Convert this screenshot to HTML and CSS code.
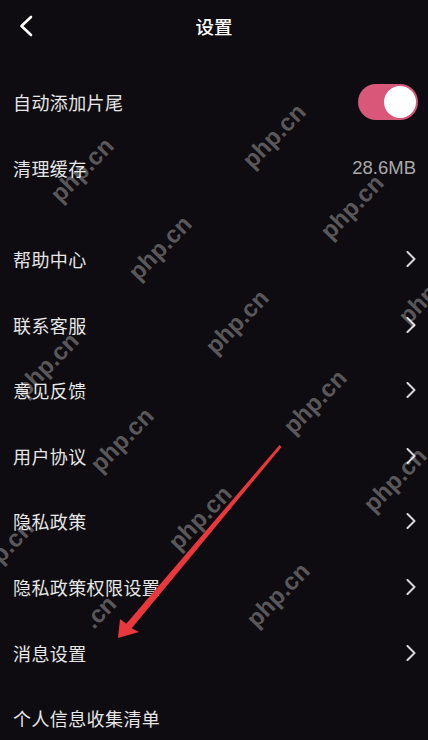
FILE: index.html
```html
<!DOCTYPE html>
<html lang="zh-CN">
<head>
  <meta charset="UTF-8" />
  <meta name="viewport" content="width=device-width, initial-scale=1.0"/>
  <title>设置</title>
  <link rel="stylesheet" href="styles.css">
</head>
<body>
  <div class="screen">
    <header class="nav">
      <span class="back">
        <svg width="14" height="22" viewBox="0 0 14 22"><polyline points="12,2 2.5,11 12,20" fill="none" stroke="#fff" stroke-width="2.6" stroke-linecap="round" stroke-linejoin="round"/></svg>
      </span>
      <h1>设置</h1>
      <span></span>
    </header>

    <section class="group group-top">
      <div class="row">
        <span class="label">自动添加片尾</span>
        <span class="toggle on"><span class="knob"></span></span>
      </div>
      <div class="row">
        <span class="label">清理缓存</span>
        <span class="value">28.6MB</span>
      </div>
    </section>

    <section class="group">
      <div class="row"><span class="label">帮助中心</span><span class="chev"></span></div>
      <div class="row"><span class="label">联系客服</span><span class="chev"></span></div>
      <div class="row"><span class="label">意见反馈</span><span class="chev"></span></div>
      <div class="row"><span class="label">用户协议</span><span class="chev"></span></div>
      <div class="row"><span class="label">隐私政策</span><span class="chev"></span></div>
      <div class="row"><span class="label">隐私政策权限设置</span><span class="chev"></span></div>
      <div class="row"><span class="label">消息设置</span><span class="chev"></span></div>
      <div class="row"><span class="label">个人信息收集清单</span></div>
    </section>

    <!-- watermark layer -->
    <div class="marks">
      <span style="left:82px;top:170px">php.cn</span>
      <span style="left:274px;top:136px">php.cn</span>
      <span style="left:352px;top:207px">php.cn</span>
      <span style="left:160px;top:248px">php.cn</span>
      <span style="left:237px;top:322px">php.cn</span>
      <span style="left:47px;top:365px">php.cn</span>
      <span style="left:430px;top:292px">php.cn</span>
      <span style="left:315px;top:402px">php.cn</span>
      <span style="left:122px;top:440px">php.cn</span>
      <span style="left:395px;top:480px">php.cn</span>
      <span style="left:200px;top:518px">php.cn</span>
      <span style="left:2px;top:552px">php.cn</span>
      <span style="left:278px;top:595px">php.cn</span>
      <span style="left:100px;top:612px">.cn</span>
    </div>

    <svg class="arrow" viewBox="0 0 428 740">
      <polygon points="279.5,445 281.5,447 131.7,628.3 139,632 118,638 120,619 126.3,623.7" fill="#e8383d"/>
    </svg>
  </div>

  <script>
    document.querySelectorAll('.chev').forEach(el => {
      el.innerHTML = '<svg width="10" height="16" viewBox="0 0 10 16"><polyline points="1.5,1 8.5,8 1.5,15" fill="none" stroke="#d8d8d8" stroke-width="2" stroke-linecap="round" stroke-linejoin="round"/></svg>';
    });
  </script>
</body>
</html>
```

FILE: styles.css
```css
body {
  margin: 0;
  background: #0e0c10;
  font-family: "Noto Sans CJK SC", "Noto Sans", sans-serif;
  color: #e6e6e6;
}
.screen {
  position: relative;
  width: 428px;
  height: 740px;
  overflow: hidden;
  background: #0e0c10;
}
.nav {
  height: 52px;
  display: grid;
  grid-template-columns: 60px 1fr 60px;
  align-items: center;
}
.back {
  display: flex;
  align-items: center;
  padding-left: 19px;
}
.nav h1 {
  margin: 0;
  text-align: center;
  font-size: 18.5px;
  font-weight: 500;
  color: #fff;
  line-height: 52px;
}
.group-top {
  margin-top: 17.2px;
}
.group {
  margin-top: 25.8px;
}
.group-top.group {
  margin-top: 17.2px;
}
.row {
  height: 65.6px;
  display: flex;
  align-items: center;
  justify-content: space-between;
  padding: 0 12px 0 13px;
}
.label {
  font-size: 18px;
  letter-spacing: 0.4px;
}
.value {
  font-family: "Liberation Sans", Arial, sans-serif;
  font-size: 18.5px;
  color: #a9a9a9;
}
.chev {
  display: flex;
  align-items: center;
}
.toggle {
  position: relative;
  width: 60px;
  height: 36px;
  border-radius: 18px;
  background: #d9587a;
  margin-right: -2px;
}
.toggle .knob {
  position: absolute;
  top: 2px;
  right: 2px;
  width: 32px;
  height: 32px;
  border-radius: 50%;
  background: #fff;
}
.marks {
  position: absolute;
  inset: 0;
  pointer-events: none;
}
.marks span {
  position: absolute;
  transform: translate(-50%, -50%) rotate(-46deg);
  font-family: "Liberation Sans", Arial, sans-serif;
  font-weight: bold;
  font-size: 24px;
  color: rgba(255, 255, 255, 0.32);
  white-space: nowrap;
}
.arrow {
  position: absolute;
  left: 0;
  top: 0;
  width: 428px;
  height: 740px;
  pointer-events: none;
}
```
